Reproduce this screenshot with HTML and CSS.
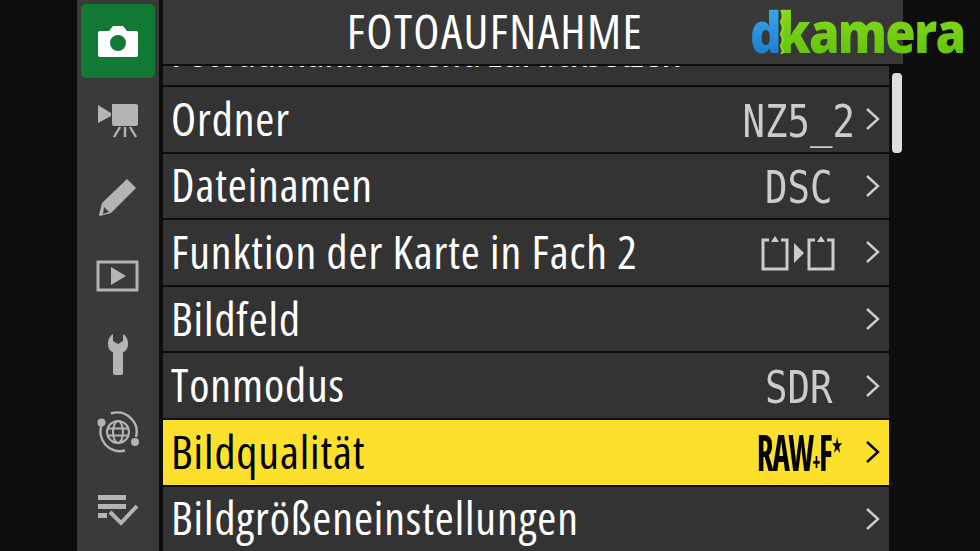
FILE: index.html
```html
<!DOCTYPE html>
<html lang="de">
<head>
    <meta charset="UTF-8">
    <title>Fotoaufnahme</title>
    <link rel="stylesheet" href="styles.css">
</head>
<body>
    <div class="screen">
        <nav class="sidebar">
            <div class="tab tab-active">
                <svg width="44" height="36" viewBox="0 0 44 36"><path fill="#fff" d="M4 8h9l4-5h10l4 5h9q2 0 2 2v22q0 2-2 2H4q-2 0-2-2V10q0-2 2-2z"/><circle cx="22" cy="20" r="8" fill="#127a35"/></svg>
            </div>
            <div class="tab">
                <svg width="44" height="36" viewBox="0 0 44 36"><path fill="#b4b4b4" d="M2 3l13 8v3L2 21zM16 2h24q2 0 2 2v18q0 2-2 2H18q-2 0-2-2z"/><path stroke="#b4b4b4" stroke-width="2.400" fill="none" d="M24 25l-6 10M29 25v10M34 25l6 10"/></svg>
            </div>
            <div class="tab">
                <svg width="44" height="44" viewBox="0 0 44 44"><path fill="#b4b4b4" d="M31 3l9 9-25 25-11 3-1-1 3-12z"/><path fill="#3a3a3a" d="M8 31l5 5-6 2z"/></svg>
            </div>
            <div class="tab">
                <svg width="44" height="32" viewBox="0 0 44 32"><rect x="2" y="2" width="39" height="28" fill="none" stroke="#b4b4b4" stroke-width="3"/><path fill="#b4b4b4" d="M15 7l15 9-15 9z"/></svg>
            </div>
            <div class="tab">
                <svg width="24" height="44" viewBox="0 0 24 44"><path fill="#b4b4b4" d="M7 2v7l5 3 5-3V2q5 3 5 10 0 6-5 8.500V41q0 2-2 2H9q-2 0-2-2V20.500Q2 18 2 12 2 5 7 2z"/></svg>
            </div>
            <div class="tab">
                <svg width="46" height="44" viewBox="0 0 46 44"><g fill="none" stroke="#b4b4b4" stroke-width="2"><path stroke-width="2.400" d="M7 14A19.500 19.500 0 0 0 30 40.500M16 3.500A19.500 19.500 0 0 1 41 27"/><circle cx="23" cy="22" r="11"/><ellipse cx="23" cy="22" rx="5" ry="11"/><path d="M12 18.500h22M12 25.500h22"/></g><circle cx="6.500" cy="12.500" r="4" fill="#b4b4b4"/><circle cx="40" cy="32" r="4" fill="#b4b4b4"/></svg>
            </div>
            <div class="tab">
                <svg width="42" height="32" viewBox="0 0 42 32"><path fill="#b4b4b4" d="M1 1h28v5H1zM1 10h28v5H1zM1 19h9v5H1z"/><path fill="none" stroke="#b4b4b4" stroke-width="4" d="M13 18l11 11 16-17"/></svg>
            </div>
        </nav>

        <main class="content">
            <header class="title-bar"><span class="title-text">FOTOAUFNAHME</span></header>
            <div class="menu">
                <div class="row row-cut"><span class="label">Fotoaufnahmemenü zurücksetzen</span></div>
                <div class="row">
                    <span class="label">Ordner</span>
                    <span class="value"><span class="mono">NZ5_2</span></span>
                    <svg class="chevron" viewBox="0 0 14 22"><path d="M1 1l11 10L1 21"/></svg>
                </div>
                <div class="row">
                    <span class="label">Dateinamen</span>
                    <span class="value"><span class="mono">DSC</span></span>
                    <svg class="chevron" viewBox="0 0 14 22"><path d="M1 1l11 10L1 21"/></svg>
                </div>
                <div class="row">
                    <span class="label">Funktion der Karte in Fach 2</span>
                    <span class="value">
                        <svg class="cards" width="76" height="36" viewBox="0 0 76 36"><g fill="none" stroke="#ccc" stroke-width="3"><path d="M8 5H2v29h24V5h-6M54 5h-6v29h24V5h-6"/></g><path fill="#ccc" d="M14 1l4 6h-8zM60 1l4 6h-8zM33 8l10 10-10 10z"/></svg>
                    </span>
                    <svg class="chevron" viewBox="0 0 14 22"><path d="M1 1l11 10L1 21"/></svg>
                </div>
                <div class="row">
                    <span class="label">Bildfeld</span>
                    <span class="value"></span>
                    <svg class="chevron" viewBox="0 0 14 22"><path d="M1 1l11 10L1 21"/></svg>
                </div>
                <div class="row">
                    <span class="label">Tonmodus</span>
                    <span class="value"><span class="mono">SDR</span></span>
                    <svg class="chevron" viewBox="0 0 14 22"><path d="M1 1l11 10L1 21"/></svg>
                </div>
                <div class="row row-selected">
                    <span class="label">Bildqualität</span>
                    <span class="value"><span class="quality">RAW<small>+</small>F<sup>★</sup></span></span>
                    <svg class="chevron" viewBox="0 0 14 22"><path d="M1 1l11 10L1 21"/></svg>
                </div>
                <div class="row">
                    <span class="label">Bildgrößeneinstellungen</span>
                    <span class="value"></span>
                    <svg class="chevron" viewBox="0 0 14 22"><path d="M1 1l11 10L1 21"/></svg>
                </div>
            </div>
            <div class="scrollbar"></div>
        </main>

        <div class="logo">
            <span class="logo-d">d</span><span class="logo-rest">kamera</span>
            <svg class="logo-wave" width="10" height="44" viewBox="0 0 10 44"><path d="M4 0l3 6-3 6 3 6-3 6 3 6-3 6 3 6-3 2"/></svg>
        </div>
    </div>
</body>
</html>
```

FILE: styles.css
```css
* {
    box-sizing: border-box;
}

html, body {
    margin: 0;
    height: 100%;
    overflow: hidden;
    background: #0d0d0d;
}

.screen {
    position: relative;
    width: 980px;
    height: 551px;
    padding-left: 77px;
    display: flex;
    overflow: hidden;
    font-family: "Open Sans", sans-serif;
    font-stretch: 75%;
}

.sidebar {
    width: 82px;
    height: 551px;
    flex: none;
    padding: 3px 4px 0;
    background: #3a3a3a;
    display: grid;
    grid-auto-rows: 78px;
    justify-items: center;
}

.tab {
    width: 74px;
    height: 74px;
    margin-top: 2px;
    display: flex;
    align-items: center;
    justify-content: center;
    border-radius: 5px;
}

.tab-active {
    margin-top: 1px;
    background: #127a35;
}

.content {
    position: relative;
    width: 740px;
    margin-left: 4px;
    flex: none;
}

.title-bar {
    height: 64px;
    padding-right: 76px;
    background: #383838;
    color: #fff;
    font-size: 48px;
    letter-spacing: 1.4px;
    line-height: 62px;
    text-align: center;
}

.menu {
    width: 726px;
    margin-top: 2px;
    display: grid;
    grid-template-rows: 19px;
    grid-auto-rows: 64.6px;
    row-gap: 2px;
}

.row {
    display: flex;
    align-items: center;
    padding: 0 9px 0 8px;
    background: #333;
    color: #fff;
    overflow: hidden;
}

.row-cut {
    align-items: flex-start;
}

.row-cut .label {
    margin-top: -42px;
    letter-spacing: -0.8px;
}

.row-selected {
    background: #fde02c;
    color: #000;
}

.label {
    margin-top: -3px;
    font-size: 46px;
    letter-spacing: 0.9px;
    line-height: 50px;
    white-space: nowrap;
}

.value {
    width: 116px;
    margin-left: auto;
    display: flex;
    align-items: center;
    justify-content: center;
}

.mono {
    padding-top: 4px;
    font-family: "DejaVu Sans Mono", monospace;
    font-size: 45px;
    color: #ccc;
    transform: scaleX(0.83);
}

.cards {
    margin-top: 2px;
}

.quality {
    font-weight: bold;
    font-size: 50px;
    letter-spacing: -2px;
    transform: scaleX(0.66);
    white-space: nowrap;
}

.quality small {
    font-size: 24px;
}

.quality sup {
    font-size: 22px;
    line-height: 0;
    font-family: "DejaVu Sans", sans-serif;
}

.chevron {
    width: 14px;
    height: 22px;
    flex: none;
    margin-left: 9px;
    fill: none;
    stroke: #ccc;
    stroke-width: 2.400;
}

.row-selected .chevron {
    stroke: #000;
}

.scrollbar {
    position: absolute;
    left: 729px;
    top: 73px;
    width: 10px;
    height: 80px;
    border-radius: 4px;
    background: #ddd;
}

.logo {
    position: absolute;
    left: 750px;
    top: -1px;
    height: 60px;
    display: flex;
    font-family: "Open Sans", sans-serif;
    font-weight: 800;
    font-stretch: 100%;
    font-size: 56px;
    line-height: 64px;
    letter-spacing: -2px;
    transform: scaleX(0.88);
    transform-origin: left center;
}

.logo-d {
    background: linear-gradient(#3fb0ee, #1a78cc);
    -webkit-background-clip: text;
    background-clip: text;
    color: transparent;
}

.logo-rest {
    margin-left: -2px;
    background: linear-gradient(#8ede1c, #5fc20e);
    -webkit-background-clip: text;
    background-clip: text;
    color: transparent;
}

.logo-wave {
    position: absolute;
    left: 31px;
    top: 11px;
    fill: none;
    stroke: #8ede1c;
    stroke-width: 2;
}
```
